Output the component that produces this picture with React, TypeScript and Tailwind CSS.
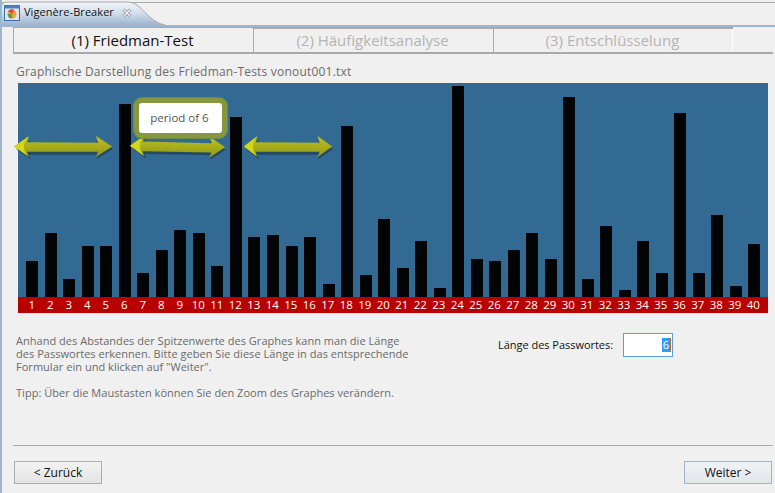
const tops = [261,233,279,246,246,104,273,250,230,233,266,117,237,235,246,237,284,126,275,219,268,241,288,86,259,261,250,233,259,97,279,226,290,241,273,113,273,215,286,244];

function Arrow({ className, id }: { className: string; id: string }) {
  return (
    <svg className={className} viewBox="0 0 100 26" preserveAspectRatio="none">
      <defs>
        <linearGradient id={id} x1="0" y1="0" x2="0" y2="1">
          <stop offset="0" stopColor="#bcc020" />
          <stop offset="0.5" stopColor="#a9ad1a" />
          <stop offset="1" stopColor="#8d9818" />
        </linearGradient>
      </defs>
      <path d="M2 14 L17 25 L15 20 L84 20 L82 25 L99 14 L82 5 L84 11 L15 11 L17 5 Z" fill="#14283a" opacity="0.5" transform="translate(1 1.5)" />
      <path d="M1 13 L16 2 L14 8.5 L85 9 L83 2 L99 13 L83 24 L85 18.5 L14 18.5 L16 24 Z" fill={`url(#${id})`} />
      <path d="M1 13 L15 3 Q7 13 15 23 Z" fill="#d3d716" />
    </svg>
  );
}

export default function App() {
  const font = { fontFamily: '"Open Sans", "Noto Sans", sans-serif' };
  return (
    <div className="w-[775px] h-[493px] overflow-hidden bg-[#f0f0f0] border-l-2 border-[#9db6d2] flex flex-col relative" style={font}>
      <div className="h-[27px] shrink-0 border-b-2 border-[#9cb5d1] relative flex items-end">
        <div className="absolute left-0 right-0 top-[2px] h-px bg-[#a9a9a9]" />
        <div className="relative w-[163px] h-[25px] flex items-center">
          <svg className="absolute inset-0" width="163" height="25" viewBox="0 0 163 25">
            <defs>
              <linearGradient id="tabg" x1="0" y1="0" x2="0" y2="1">
                <stop offset="0" stopColor="#f2f4f7" />
                <stop offset="0.45" stopColor="#d5e0ec" />
                <stop offset="1" stopColor="#9cb5d1" />
              </linearGradient>
            </defs>
            <path d="M0 25 L0 5 Q0 2 4 2 L126 2 C140 2 145 22 163 25 Z" fill="url(#tabg)" />
            <path d="M0 5 Q0 2 4 2 L126 2 C140 2 145 22 163 25" fill="none" stroke="#a5a9ad" />
          </svg>
          <svg className="relative ml-[2px]" width="16" height="16" viewBox="0 0 16 16">
            <rect x="0.5" y="0.5" width="15" height="15" fill="#dce6f2" stroke="#3c6ea5" />
            <rect x="0.5" y="0.5" width="15" height="3" fill="#4f82bd" />
            <circle cx="8" cy="9" r="4.5" fill="#e8a33c" />
            <path d="M8 9 L4 6 A5 5 0 0 1 10 4.8 Z" fill="#d9463a" />
            <path d="M8 9 L8 13.5 A4.5 4.5 0 0 1 3.6 9 Z" fill="#5a9c4a" />
          </svg>
          <span className="relative ml-[4px] text-[11px] tracking-[0.06px] text-[#111]">Vigenère-Breaker</span>
          <svg className="relative ml-[8px]" width="10" height="10" viewBox="0 0 10 10">
            <path d="M1.5 1.5 L8.5 8.5 M8.5 1.5 L1.5 8.5" stroke="#8a8f96" strokeWidth="3" />
            <path d="M1.5 1.5 L8.5 8.5 M8.5 1.5 L1.5 8.5" stroke="#f6f6f6" strokeWidth="1.4" />
          </svg>
        </div>
      </div>

      <div className="ml-[11px] w-[760px] h-[27px] shrink-0 border-b-2 border-[#a9a9a9] flex text-[15px]">
        <div className="w-[241px] pr-[2px] border-l border-r border-t border-[#a9a9a9] bg-[#f0f0f0] flex items-center justify-center text-[#111]">(1) Friedman-Test</div>
        <div className="w-[240px] pr-[2px] border-t-2 border-[#a9a9a9] border-r flex items-center justify-center text-[#b4b4b4]">(2) Häufigkeitsanalyse</div>
        <div className="w-[239px] pr-[2px] border-t-2 border-[#a9a9a9] flex items-center justify-center text-[#b4b4b4] border-r-0 relative">(3) Entschlüsselung<div className="absolute right-0 top-0 bottom-0 w-px bg-white" /></div>
      </div>

      <div className="ml-[14px] mt-[10px] text-[12px] leading-[16px] tracking-[0.2px] text-[#6b6b6b]">Graphische Darstellung des Friedman-Tests vonout001.txt</div>

      <div className="ml-[16px] mt-[3px] w-[750px] relative">
        <div className="h-[214px] bg-[#336a94] pl-[5.05px] grid grid-cols-[repeat(40,18.53px)] items-end">
          {tops.map((t, i) => (
            <div key={i} className="flex justify-center">
              <div className="w-3 bg-[#020406]" style={{ height: 297 - t }} />
            </div>
          ))}
        </div>
        <div className="h-4 bg-[#b80000] pl-[4.5px] grid grid-cols-[repeat(40,18.5px)] text-[11.5px] leading-4 text-white text-center">
          {tops.map((_, i) => <span key={i}>{i + 1}</span>)}
        </div>
        <Arrow id="a1" className="absolute left-[-5px] top-[51px] w-[100px] h-[25px]" />
        <Arrow id="a2" className="absolute left-[111px] top-[51px] w-[97px] h-[25px] rotate-[1deg]" />
        <Arrow id="a3" className="absolute left-[225px] top-[51px] w-[90px] h-[25px]" />
        <div className="absolute left-[115px] top-[14px] w-[95px] h-[42px] rounded-[9px] bg-[#86973c] border border-[#6f8a4a] flex items-center justify-center">
          <div className="w-[83px] h-[30px] rounded-[3px] bg-white flex items-center justify-center text-[11.5px] text-[#555] pr-[2px]">period of 6</div>
        </div>
      </div>

      <div className="ml-[14px] mt-[20px] flex">
        <div className="w-[482px] pt-px text-[11px] leading-[13px] tracking-[0.03px] text-[#6a6a6a]">
          <p>Anhand des Abstandes der Spitzenwerte des Graphes kann man die Länge</p>
          <p>des Passwortes erkennen. Bitte geben Sie diese Länge in das entsprechende</p>
          <p>Formular ein und klicken auf "Weiter".</p>
          <p className="mt-[13px]">Tipp: Über die Maustasten können Sie den Zoom des Graphes verändern.</p>
        </div>
        <div className="flex items-start">
          <span className="text-[11px] leading-[24px] tracking-[-0.03px] text-[#111] w-[125px]">Länge des Passwortes:</span>
          <div className="w-[50px] h-[24px] border border-[#5a9ee6] bg-white flex items-center justify-end pr-[1px] text-[11px]">
            <span className="bg-[#3399ff] text-white leading-[14px] px-px border-r border-[#c26a10]">6</span>
          </div>
        </div>
      </div>

      <div className="flex-1" />
      <div className="ml-[11px] w-[760px] h-px bg-[#a9a9a9] shrink-0" />
      <div className="ml-[12px] w-[758px] mt-[15px] mb-[9px] flex justify-between text-[12px] shrink-0">
        <button className="w-[88px] h-[23px] border border-[#adadad] bg-gradient-to-b from-[#f2f2f2] to-[#e4e4e4] text-[#111]">&lt; Zurück</button>
        <button className="w-[88px] h-[23px] border border-[#a3b4c9] bg-gradient-to-b from-[#f0f3f6] to-[#e2e6ea] text-[#111]">Weiter &gt;</button>
      </div>
    </div>
  );
}
